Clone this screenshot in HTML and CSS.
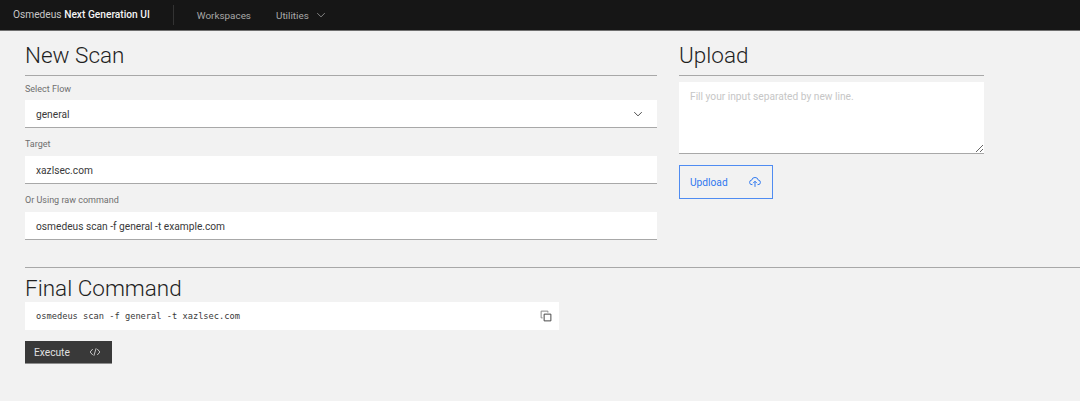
FILE: index.html
```html
<!DOCTYPE html>
<html lang="en">
<head>
<meta charset="utf-8">
<title>Osmedeus Next Generation UI</title>
<link rel="stylesheet" href="styles.css">
</head>
<body>
<header class="topbar">
  <a class="brand">Osmedeus <b>Next Generation UI</b></a>
  <nav class="nav">
    <a class="nav-item">Workspaces</a>
    <a class="nav-item">Utilities
      <svg class="nav-chevron" viewBox="0 0 16 16" width="12" height="12"><path d="M3 5.5 8 10.5 13 5.5" fill="none" stroke="currentColor" stroke-width="1"/></svg>
    </a>
  </nav>
</header>
<main class="page">
  <div class="columns">
    <section class="scan">
      <h2 class="title">New Scan</h2>
      <label class="label">Select Flow</label>
      <div class="field">general
        <svg class="chevron" viewBox="0 0 16 16" width="12" height="12"><path d="M3 5.5 8 10.5 13 5.5" fill="none" stroke="#393939" stroke-width="1.2"/></svg>
      </div>
      <label class="label">Target</label>
      <div class="field">xazlsec.com</div>
      <label class="label">Or Using raw command</label>
      <div class="field">osmedeus scan -f general -t example.com</div>
    </section>
    <section class="upload">
      <h2 class="title">Upload</h2>
      <textarea class="textarea" placeholder="Fill your input separated by new line."></textarea>
      <button class="btn-outline">Updload
        <svg viewBox="0 0 16 16" width="12" height="12"><path d="M4.6 11.5H4a3 3 0 0 1-.4-6A4.5 4.5 0 0 1 12.400 5.500a3 3 0 0 1-.4 6h-.6M8 14.500V7M5.500 9.500 8 7l2.500 2.500" fill="none" stroke="currentColor" stroke-width="1.300"/></svg>
      </button>
    </section>
  </div>
  <hr class="divider">
  <h2 class="title title-final">Final Command</h2>
  <div class="code">
    <code>osmedeus scan -f general -t xazlsec.com</code>
    <svg viewBox="0 0 16 16" width="12" height="12"><path d="M5.500 5.500h9v9h-9z" fill="none" stroke="#444" stroke-width="1.300"/><path d="M3.500 10.500h-2v-9h9v2" fill="none" stroke="#888" stroke-width="1.300"/></svg>
  </div>
  <button class="btn-dark">Execute
    <svg viewBox="0 0 16 16" width="12" height="12"><path d="M5 4 1.500 8 5 12M11 4l3.500 4L11 12M9.500 3 6.500 13" fill="none" stroke="currentColor" stroke-width="1.100"/></svg>
  </button>
</main>
</body>
</html>
```

FILE: styles.css
```css
* { box-sizing: border-box; }
html, body { margin: 0; height: 100%; }
body {
  background: #f2f2f2;
  color: #262626;
  font-family: "Roboto", "Liberation Sans", sans-serif;
  overflow: hidden;
}
.topbar {
  display: flex;
  align-items: center;
  height: 31px;
  background: #161616;
  border-bottom: 1px solid #6f6f6f;
  font-size: 10.200px;
  color: #c6c6c6;
  padding-left: 13px;
}
.brand { padding-right: 23px; border-right: 1px solid #333; height: 20px; line-height: 20px; }
.brand b { color: #f4f4f4; font-weight: 500; }
.nav { display: flex; gap: 25px; padding-left: 23px; color: #a8a8a8; font-size: 9.900px; }
.nav-item { display: flex; align-items: center; gap: 6px; }
.page { padding-left: 25px; }
.columns { display: flex; gap: 22px; }
.scan { width: 632px; }
.upload { width: 305px; }
.title {
  margin: 0;
  font-size: 22.500px;
  font-weight: 300;
  line-height: 30px;
  padding-top: 9px;
  height: 45px;
  border-bottom: 1px solid #a8a8a8;
  color: #1f1f1f;
}
.title-final { border: 0; height: auto; padding: 0; margin-top: 6px; margin-bottom: -1px; line-height: 29px; }
.label {
  display: block;
  font-size: 9px;
  line-height: 12px;
  color: #6f6f6f;
  margin: 7px 0 5px;
}
.field + .label { margin: 10px 0 6px; }
.field {
  display: flex;
  align-items: center;
  justify-content: space-between;
  height: 28px;
  padding: 1px 13px 0 11px;
  background: #fff;
  border-bottom: 1px solid #a8a8a8;
  font-size: 10.200px;
  color: #393939;
}
.textarea {
  display: block;
  width: 305px;
  height: 72px;
  margin: 6px 0 11px;
  padding: 9px 11px;
  border: 0;
  border-bottom: 1px solid #a8a8a8;
  border-radius: 0;
  background: #fff;
  font: 10.200px "Roboto", "Liberation Sans", sans-serif;
  outline: none;
}
.textarea::placeholder { color: #c6c6c6; }
.btn-outline {
  display: flex;
  align-items: center;
  justify-content: space-between;
  width: 94px;
  height: 34px;
  padding: 0 11px 0 10px;
  background: transparent;
  border: 1px solid #4f8cf2;
  color: #2f78f0;
  font: 10.200px "Roboto", "Liberation Sans", sans-serif;
}
.divider {
  margin: 27px 0 0;
  border: 0;
  border-top: 1px solid #a8a8a8;
}
.code {
  display: flex;
  align-items: center;
  justify-content: space-between;
  width: 534px;
  height: 28px;
  padding: 0 7px 0 11px;
  background: #fff;
  font: 8.700px "DejaVu Sans Mono", "Liberation Mono", monospace;
  color: #393939;
}
.btn-dark {
  display: flex;
  align-items: center;
  justify-content: space-between;
  width: 87px;
  height: 23px;
  margin-top: 11px;
  padding: 0 11px 0 9px;
  background: #393939;
  border: 0;
  border-bottom: 1px solid #8d8d8d;
  color: #e0e0e0;
  font: 10.200px "Roboto", "Liberation Sans", sans-serif;
}
```
